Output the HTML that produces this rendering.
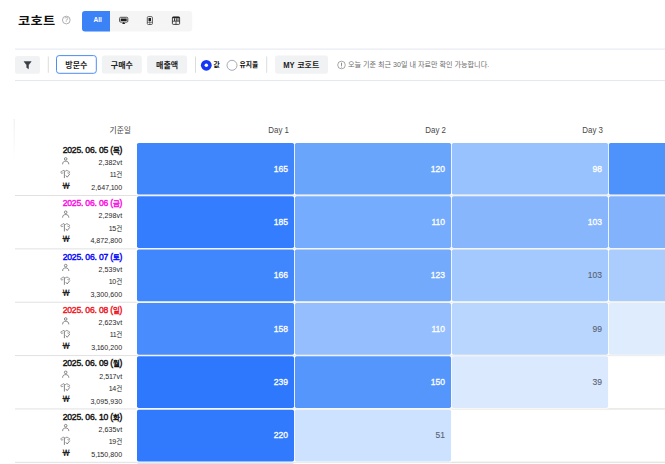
<!DOCTYPE html>
<html lang="ko"><head><meta charset="utf-8"><title>코호트</title>
<style>
html,body{margin:0;padding:0;background:#fff;}
body{width:665px;height:464px;overflow:hidden;position:relative;font-family:"Liberation Sans","Noto Sans CJK KR",sans-serif;color:#111;}
.abs{position:absolute;}
.t{position:absolute;white-space:nowrap;line-height:1;}
.bt{position:absolute;top:55.6px;height:18px;font-size:8px;font-weight:700;color:#222;text-align:center;line-height:19.4px;white-space:nowrap;}
.cv{position:absolute;font-size:8.5px;font-weight:400;-webkit-text-stroke:0.3px currentColor;line-height:1;white-space:nowrap;}
.date{position:absolute;right:542.8px;font-size:8.6px;font-weight:400;-webkit-text-stroke:0.4px currentColor;line-height:1;white-space:nowrap;letter-spacing:-0.2px;}
.date span{font-size:7.4px;}
.m{position:absolute;right:542.8px;font-size:7.05px;line-height:1;white-space:nowrap;color:#262626;}
.m span{font-size:6.5px;}
.m i{font-style:normal;margin:0 -0.45px;}
#shapes{position:absolute;left:0;top:0;}
</style></head><body>

<svg id="shapes" width="665" height="464" viewBox="0 0 665 464">
<rect x="82" y="10.9" width="110.2" height="20.7" rx="3" fill="#f5f5f6"/>
<path d="M85 10.9 H110 V31.6 H85 A3 3 0 0 1 82 28.6 V13.9 A3 3 0 0 1 85 10.9 Z" fill="#3b82f6"/>
<circle cx="66.3" cy="20.05" r="3.85" fill="none" stroke="#949494" stroke-width="0.75"/>
<rect x="119.6" y="17.3" width="8.2" height="4.8" rx="1" fill="none" stroke="#3a3a3a" stroke-width="0.9"/>
<rect x="120.7" y="18.5" width="6" height="2.5" fill="#1c1c1c"/>
<path d="M122 24 L123.7 21.9 L125.4 24 Z" fill="#222"/>
<rect x="147.3" y="16.6" width="5.1" height="7.9" rx="1" fill="none" stroke="#3a3a3a" stroke-width="0.8"/>
<rect x="148.5" y="18" width="2.5" height="3" fill="#1c1c1c"/>
<path d="M149.75 21 V22.2 M147.3 22.3 H152.4 M149.85 22.3 V24.5" stroke="#333" stroke-width="0.6"/>
<rect x="172.4" y="16.9" width="7.2" height="7.5" rx="0.9" fill="none" stroke="#2e2e2e" stroke-width="0.9"/>
<rect x="172.4" y="16.9" width="7.2" height="1.3" fill="#222"/>
<path d="M174.5 18.2 V21 M176.3 18.2 V21 M178 18.2 V21" stroke="#222" stroke-width="0.9"/>
<path d="M172.4 21.2 H179.6 M176 21.2 V24.4" stroke="#2e2e2e" stroke-width="0.8"/>
<defs><linearGradient id="lg" x1="0" y1="0" x2="0" y2="1"><stop offset="0" stop-color="#efefef"/><stop offset="1" stop-color="#fff"/></linearGradient></defs><rect x="13.6" y="119" width="1.2" height="40" fill="url(#lg)"/>
<rect x="15" y="48.6" width="650" height="1" fill="#e4e6ef"/>
<rect x="15" y="80.1" width="650" height="1" fill="#e4e6ef"/>
<rect x="15" y="56" width="25" height="17.8" rx="2.6" fill="#f1f2f4"/>
<path d="M24 61.6 H31.2 L28.5 65 V68.8 L26.7 67.6 V65 Z" fill="#3a3f47" stroke="#3a3f47" stroke-width="0.5" stroke-linejoin="round"/>
<rect x="47.8" y="56.5" width="1" height="16.3" fill="#dcdcdc"/>
<rect x="195.0" y="56.5" width="1" height="16.3" fill="#dcdcdc"/>
<rect x="266.2" y="56.5" width="1" height="16.3" fill="#dcdcdc"/>
<rect x="56.5" y="55.6" width="39.8" height="17.7" rx="2.6" fill="#fff" stroke="#4d8df6" stroke-width="1"/>
<rect x="101.8" y="55.6" width="40" height="18" rx="2.6" fill="#f1f2f4"/>
<rect x="147.1" y="55.6" width="40" height="18" rx="2.6" fill="#f1f2f4"/>
<rect x="275" y="55.4" width="53" height="18.3" rx="2.6" fill="#f1f2f4"/>
<circle cx="206.3" cy="65.3" r="5.4" fill="#1438f5"/><circle cx="206.3" cy="65.3" r="1.75" fill="#fff"/>
<circle cx="232" cy="65.3" r="5" fill="#fff" stroke="#8e95a6" stroke-width="0.8"/>
<circle cx="341.5" cy="65" r="3.8" fill="none" stroke="#7a7a7a" stroke-width="0.65"/><path d="M341.5 62.7 V65.9 M341.5 66.7 V67.5" stroke="#6a6a6a" stroke-width="0.75"/>
<rect x="15" y="195.00" width="650" height="1" fill="#e1e1e1"/>
<g fill="none" stroke="#4a4a4a" stroke-width="0.65"><circle cx="65.7" cy="158.90" r="1.3"/><path d="M62.6 164.30 C62.6 161.90 64 161.20 65.7 161.20 C67.4 161.20 68.8 161.90 68.8 164.30"/></g>
<g fill="none" stroke="#5a5a5a" stroke-width="0.55" stroke-linecap="round" stroke-linejoin="round" transform="translate(60.3,170.00)"><path d="M3.2 0.4 L0.5 1.8 L1.1 3.4 L2.6 2.9"/><path d="M6.6 0.4 L9.4 1.8 L8.8 3.4 L7.4 2.9"/><path d="M3.2 0.4 C3.7 1.5 6.1 1.5 6.6 0.4"/><path d="M4.1 1.6 V7.7" stroke="#444" stroke-width="0.65"/><path d="M5.8 5.8 L6.9 7.2 L9.3 4.2" stroke="#444" stroke-width="0.65"/></g>
<rect x="15" y="248.36" width="650" height="1" fill="#e1e1e1"/>
<g fill="none" stroke="#4a4a4a" stroke-width="0.65"><circle cx="65.7" cy="212.26" r="1.3"/><path d="M62.6 217.66 C62.6 215.26 64 214.56 65.7 214.56 C67.4 214.56 68.8 215.26 68.8 217.66"/></g>
<g fill="none" stroke="#5a5a5a" stroke-width="0.55" stroke-linecap="round" stroke-linejoin="round" transform="translate(60.3,223.36)"><path d="M3.2 0.4 L0.5 1.8 L1.1 3.4 L2.6 2.9"/><path d="M6.6 0.4 L9.4 1.8 L8.8 3.4 L7.4 2.9"/><path d="M3.2 0.4 C3.7 1.5 6.1 1.5 6.6 0.4"/><path d="M4.1 1.6 V7.7" stroke="#444" stroke-width="0.65"/><path d="M5.8 5.8 L6.9 7.2 L9.3 4.2" stroke="#444" stroke-width="0.65"/></g>
<rect x="15" y="301.72" width="650" height="1" fill="#e1e1e1"/>
<g fill="none" stroke="#4a4a4a" stroke-width="0.65"><circle cx="65.7" cy="265.62" r="1.3"/><path d="M62.6 271.02 C62.6 268.62 64 267.92 65.7 267.92 C67.4 267.92 68.8 268.62 68.8 271.02"/></g>
<g fill="none" stroke="#5a5a5a" stroke-width="0.55" stroke-linecap="round" stroke-linejoin="round" transform="translate(60.3,276.72)"><path d="M3.2 0.4 L0.5 1.8 L1.1 3.4 L2.6 2.9"/><path d="M6.6 0.4 L9.4 1.8 L8.8 3.4 L7.4 2.9"/><path d="M3.2 0.4 C3.7 1.5 6.1 1.5 6.6 0.4"/><path d="M4.1 1.6 V7.7" stroke="#444" stroke-width="0.65"/><path d="M5.8 5.8 L6.9 7.2 L9.3 4.2" stroke="#444" stroke-width="0.65"/></g>
<rect x="15" y="355.08" width="650" height="1" fill="#e1e1e1"/>
<g fill="none" stroke="#4a4a4a" stroke-width="0.65"><circle cx="65.7" cy="318.98" r="1.3"/><path d="M62.6 324.38 C62.6 321.98 64 321.28 65.7 321.28 C67.4 321.28 68.8 321.98 68.8 324.38"/></g>
<g fill="none" stroke="#5a5a5a" stroke-width="0.55" stroke-linecap="round" stroke-linejoin="round" transform="translate(60.3,330.08)"><path d="M3.2 0.4 L0.5 1.8 L1.1 3.4 L2.6 2.9"/><path d="M6.6 0.4 L9.4 1.8 L8.8 3.4 L7.4 2.9"/><path d="M3.2 0.4 C3.7 1.5 6.1 1.5 6.6 0.4"/><path d="M4.1 1.6 V7.7" stroke="#444" stroke-width="0.65"/><path d="M5.8 5.8 L6.9 7.2 L9.3 4.2" stroke="#444" stroke-width="0.65"/></g>
<rect x="15" y="408.44" width="650" height="1" fill="#e1e1e1"/>
<g fill="none" stroke="#4a4a4a" stroke-width="0.65"><circle cx="65.7" cy="372.34" r="1.3"/><path d="M62.6 377.74 C62.6 375.34 64 374.64 65.7 374.64 C67.4 374.64 68.8 375.34 68.8 377.74"/></g>
<g fill="none" stroke="#5a5a5a" stroke-width="0.55" stroke-linecap="round" stroke-linejoin="round" transform="translate(60.3,383.44)"><path d="M3.2 0.4 L0.5 1.8 L1.1 3.4 L2.6 2.9"/><path d="M6.6 0.4 L9.4 1.8 L8.8 3.4 L7.4 2.9"/><path d="M3.2 0.4 C3.7 1.5 6.1 1.5 6.6 0.4"/><path d="M4.1 1.6 V7.7" stroke="#444" stroke-width="0.65"/><path d="M5.8 5.8 L6.9 7.2 L9.3 4.2" stroke="#444" stroke-width="0.65"/></g>
<rect x="15" y="461.80" width="650" height="1" fill="#e1e1e1"/>
<g fill="none" stroke="#4a4a4a" stroke-width="0.65"><circle cx="65.7" cy="425.70" r="1.3"/><path d="M62.6 431.10 C62.6 428.70 64 428.00 65.7 428.00 C67.4 428.00 68.8 428.70 68.8 431.10"/></g>
<g fill="none" stroke="#5a5a5a" stroke-width="0.55" stroke-linecap="round" stroke-linejoin="round" transform="translate(60.3,436.80)"><path d="M3.2 0.4 L0.5 1.8 L1.1 3.4 L2.6 2.9"/><path d="M6.6 0.4 L9.4 1.8 L8.8 3.4 L7.4 2.9"/><path d="M3.2 0.4 C3.7 1.5 6.1 1.5 6.6 0.4"/><path d="M4.1 1.6 V7.7" stroke="#444" stroke-width="0.65"/><path d="M5.8 5.8 L6.9 7.2 L9.3 4.2" stroke="#444" stroke-width="0.65"/></g>
<rect x="135.90" y="141.80" width="159.25" height="53.90" rx="2.3" fill="#fff"/>
<rect x="293.80" y="141.80" width="158.35" height="53.90" rx="2.3" fill="#fff"/>
<rect x="450.80" y="141.80" width="158.35" height="53.90" rx="2.3" fill="#fff"/>
<rect x="607.80" y="141.80" width="68.30" height="53.90" rx="2.3" fill="#fff"/>
<rect x="135.90" y="195.16" width="159.25" height="53.90" rx="2.3" fill="#fff"/>
<rect x="293.80" y="195.16" width="158.35" height="53.90" rx="2.3" fill="#fff"/>
<rect x="450.80" y="195.16" width="158.35" height="53.90" rx="2.3" fill="#fff"/>
<rect x="607.80" y="195.16" width="68.30" height="53.90" rx="2.3" fill="#fff"/>
<rect x="135.90" y="248.52" width="159.25" height="53.90" rx="2.3" fill="#fff"/>
<rect x="293.80" y="248.52" width="158.35" height="53.90" rx="2.3" fill="#fff"/>
<rect x="450.80" y="248.52" width="158.35" height="53.90" rx="2.3" fill="#fff"/>
<rect x="607.80" y="248.52" width="68.30" height="53.90" rx="2.3" fill="#fff"/>
<rect x="135.90" y="301.88" width="159.25" height="53.90" rx="2.3" fill="#fff"/>
<rect x="293.80" y="301.88" width="158.35" height="53.90" rx="2.3" fill="#fff"/>
<rect x="450.80" y="301.88" width="158.35" height="53.90" rx="2.3" fill="#fff"/>
<rect x="607.80" y="301.88" width="68.30" height="53.90" rx="2.3" fill="#fff"/>
<rect x="135.90" y="355.24" width="159.25" height="53.90" rx="2.3" fill="#fff"/>
<rect x="293.80" y="355.24" width="158.35" height="53.90" rx="2.3" fill="#fff"/>
<rect x="450.80" y="355.24" width="158.35" height="53.90" rx="2.3" fill="#fff"/>
<rect x="135.90" y="408.60" width="159.25" height="53.90" rx="2.3" fill="#fff"/>
<rect x="293.80" y="408.60" width="158.35" height="53.90" rx="2.3" fill="#fff"/>
<rect x="137" y="195.00" width="528" height="1" fill="#e6e3d8" opacity="0.55"/>
<rect x="137" y="248.36" width="528" height="1" fill="#e6e3d8" opacity="0.55"/>
<rect x="137" y="301.72" width="528" height="1" fill="#e6e3d8" opacity="0.55"/>
<rect x="137" y="355.08" width="528" height="1" fill="#e6e3d8" opacity="0.55"/>
<rect x="137" y="408.44" width="528" height="1" fill="#e6e3d8" opacity="0.55"/>
<rect x="137" y="461.80" width="528" height="1" fill="#e6e3d8" opacity="0.55"/>
<rect x="137.00" y="142.90" width="157.05" height="51.70" rx="1.7" fill="rgb(63,134,253)"/>
<rect x="294.90" y="142.90" width="156.15" height="51.70" rx="1.7" fill="rgb(106,165,252)"/>
<rect x="451.90" y="142.90" width="156.15" height="51.70" rx="1.7" fill="rgb(152,194,253)"/>
<rect x="608.90" y="142.90" width="66.10" height="51.70" rx="1.7" fill="rgb(78,146,252)"/>
<rect x="137.00" y="196.26" width="157.05" height="51.70" rx="1.7" fill="rgb(52,125,254)"/>
<rect x="294.90" y="196.26" width="156.15" height="51.70" rx="1.7" fill="rgb(117,172,253)"/>
<rect x="451.90" y="196.26" width="156.15" height="51.70" rx="1.7" fill="rgb(135,182,252)"/>
<rect x="608.90" y="196.26" width="66.10" height="51.70" rx="1.7" fill="rgb(130,178,252)"/>
<rect x="137.00" y="249.62" width="157.05" height="51.70" rx="1.7" fill="rgb(64,135,253)"/>
<rect x="294.90" y="249.62" width="156.15" height="51.70" rx="1.7" fill="rgb(115,170,252)"/>
<rect x="451.90" y="249.62" width="156.15" height="51.70" rx="1.7" fill="rgb(163,201,254)"/>
<rect x="608.90" y="249.62" width="66.10" height="51.70" rx="1.7" fill="rgb(170,205,254)"/>
<rect x="137.00" y="302.98" width="157.05" height="51.70" rx="1.7" fill="rgb(73,140,253)"/>
<rect x="294.90" y="302.98" width="156.15" height="51.70" rx="1.7" fill="rgb(148,190,253)"/>
<rect x="451.90" y="302.98" width="156.15" height="51.70" rx="1.7" fill="rgb(185,214,254)"/>
<rect x="608.90" y="302.98" width="66.10" height="51.70" rx="1.7" fill="rgb(222,236,254)"/>
<rect x="137.00" y="356.34" width="157.05" height="51.70" rx="1.7" fill="rgb(46,120,254)"/>
<rect x="294.90" y="356.34" width="156.15" height="51.70" rx="1.7" fill="rgb(85,150,252)"/>
<rect x="451.90" y="356.34" width="156.15" height="51.70" rx="1.7" fill="rgb(218,233,254)"/>
<rect x="137.00" y="409.70" width="157.05" height="51.70" rx="1.7" fill="rgb(49,122,254)"/>
<rect x="294.90" y="409.70" width="156.15" height="51.70" rx="1.7" fill="rgb(205,226,254)"/>
<rect x="137" y="463.2" width="157.05" height="5" rx="1.5" fill="rgb(196,220,254)"/>
</svg>

<div class="t" style="left:18px;top:14.2px;font-size:13.3px;font-weight:700;color:#111;letter-spacing:0.3px;transform-origin:0 100%;transform:scale(0.995,0.86);">코호트</div>
<div class="t" style="left:63.3px;top:16.9px;width:6px;text-align:center;font-size:6.6px;color:#8c8c8c;">?</div>
<div class="t" style="left:83.6px;width:28px;top:17px;text-align:center;color:#fff;font-size:6.6px;font-weight:700;">All</div>
<div class="bt" style="left:56px;width:40.8px;">방문수</div>
<div class="bt" style="left:101.8px;width:40.2px;">구매수</div>
<div class="bt" style="left:147px;width:40.2px;">매출액</div>
<div class="bt" style="left:275px;width:53px;"><span style="display:inline-block;font-size:9.3px;transform:scaleX(0.82);margin:0 -1.3px;vertical-align:-0.2px;">MY</span> 코호트</div>
<div class="t" style="left:213.6px;top:61.5px;font-size:6.8px;font-weight:700;color:#111;">값</div>
<div class="t" style="left:239.5px;top:61.5px;font-size:6.8px;font-weight:700;color:#111;">유지율</div>
<div class="t" style="left:348px;top:61.8px;font-size:7.1px;color:#6e6e6e;">오늘 기준 최근 30일 내 자료만 확인 가능합니다.</div>
<div class="t" style="right:534px;top:126.6px;font-size:7.8px;color:#444;">기준일</div>
<div class="t" style="right:375.85px;top:125.9px;font-size:8.8px;color:#484848;transform-origin:100% 50%;transform:scaleX(0.9);">Day 1</div>
<div class="t" style="right:218.85px;top:125.9px;font-size:8.8px;color:#484848;transform-origin:100% 50%;transform:scaleX(0.9);">Day 2</div>
<div class="t" style="right:61.85px;top:125.9px;font-size:8.8px;color:#484848;transform-origin:100% 50%;transform:scaleX(0.9);">Day 3</div>
<div class="date" style="top:146.00px;color:#111">2025. 06. 05 (<span>목</span>)</div>
<div class="m" style="top:159.10px;letter-spacing:0.1px">2,382vt</div>
<div class="m" style="top:171.30px"><i>1</i><i>1</i><span>건</span></div>
<div class="m" style="top:184.10px;letter-spacing:0.05px">2,647,<i>1</i>00</div>
<div class="t" style="left:62.1px;top:181.80px;font-size:8.5px;font-weight:700;font-family:'NanumGothic','Liberation Sans',sans-serif;color:#222;">₩</div>
<div class="cv" style="right:377.05px;top:164.55px;color:#fff;">165</div>
<div class="cv" style="right:220.05px;top:164.55px;color:#fff;">120</div>
<div class="cv" style="right:63.05px;top:164.55px;color:#fff;">98</div>
<div class="date" style="top:199.36px;color:#fb08e4">2025. 06. 06 (<span>금</span>)</div>
<div class="m" style="top:212.46px;letter-spacing:0.1px">2,298vt</div>
<div class="m" style="top:224.66px"><i>1</i>5<span>건</span></div>
<div class="m" style="top:237.46px;letter-spacing:0.05px">4,872,800</div>
<div class="t" style="left:62.1px;top:235.16px;font-size:8.5px;font-weight:700;font-family:'NanumGothic','Liberation Sans',sans-serif;color:#222;">₩</div>
<div class="cv" style="right:377.05px;top:217.91px;color:#fff;">185</div>
<div class="cv" style="right:220.05px;top:217.91px;color:#fff;">110</div>
<div class="cv" style="right:63.05px;top:217.91px;color:#fff;">103</div>
<div class="date" style="top:252.72px;color:#0404fa">2025. 06. 07 (<span>토</span>)</div>
<div class="m" style="top:265.82px;letter-spacing:0.1px">2,539vt</div>
<div class="m" style="top:278.02px"><i>1</i>0<span>건</span></div>
<div class="m" style="top:290.82px;letter-spacing:0.05px">3,300,600</div>
<div class="t" style="left:62.1px;top:288.52px;font-size:8.5px;font-weight:700;font-family:'NanumGothic','Liberation Sans',sans-serif;color:#222;">₩</div>
<div class="cv" style="right:377.05px;top:271.27px;color:#fff;">166</div>
<div class="cv" style="right:220.05px;top:271.27px;color:#fff;">123</div>
<div class="cv" style="right:63.05px;top:271.27px;color:#596273;-webkit-text-stroke-width:0.12px;">103</div>
<div class="date" style="top:306.08px;color:#f0141e">2025. 06. 08 (<span>일</span>)</div>
<div class="m" style="top:319.18px;letter-spacing:0.1px">2,623vt</div>
<div class="m" style="top:331.38px"><i>1</i><i>1</i><span>건</span></div>
<div class="m" style="top:344.18px;letter-spacing:0.05px">3,<i>1</i>60,200</div>
<div class="t" style="left:62.1px;top:341.88px;font-size:8.5px;font-weight:700;font-family:'NanumGothic','Liberation Sans',sans-serif;color:#222;">₩</div>
<div class="cv" style="right:377.05px;top:324.63px;color:#fff;">158</div>
<div class="cv" style="right:220.05px;top:324.63px;color:#fff;">110</div>
<div class="cv" style="right:63.05px;top:324.63px;color:#596273;-webkit-text-stroke-width:0.12px;">99</div>
<div class="date" style="top:359.44px;color:#111">2025. 06. 09 (<span>월</span>)</div>
<div class="m" style="top:372.54px;letter-spacing:0.1px">2,5<i>1</i>7vt</div>
<div class="m" style="top:384.74px"><i>1</i>4<span>건</span></div>
<div class="m" style="top:397.54px;letter-spacing:0.05px">3,095,930</div>
<div class="t" style="left:62.1px;top:395.24px;font-size:8.5px;font-weight:700;font-family:'NanumGothic','Liberation Sans',sans-serif;color:#222;">₩</div>
<div class="cv" style="right:377.05px;top:377.99px;color:#fff;">239</div>
<div class="cv" style="right:220.05px;top:377.99px;color:#fff;">150</div>
<div class="cv" style="right:63.05px;top:377.99px;color:#596273;-webkit-text-stroke-width:0.12px;">39</div>
<div class="date" style="top:412.80px;color:#111">2025. 06. 10 (<span>화</span>)</div>
<div class="m" style="top:425.90px;letter-spacing:0.1px">2,635vt</div>
<div class="m" style="top:438.10px"><i>1</i>9<span>건</span></div>
<div class="m" style="top:450.90px;letter-spacing:0.05px">5,<i>1</i>50,800</div>
<div class="t" style="left:62.1px;top:448.60px;font-size:8.5px;font-weight:700;font-family:'NanumGothic','Liberation Sans',sans-serif;color:#222;">₩</div>
<div class="cv" style="right:377.05px;top:431.35px;color:#fff;">220</div>
<div class="cv" style="right:220.05px;top:431.35px;color:#596273;-webkit-text-stroke-width:0.12px;">51</div>
</body></html>
